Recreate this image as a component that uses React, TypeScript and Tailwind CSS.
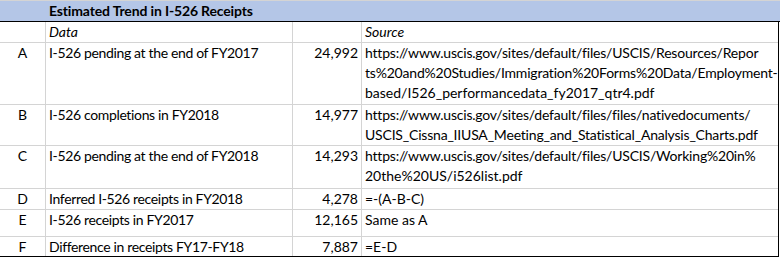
const rows = [
  {
    id: 'A',
    data: 'I-526 pending at the end of FY2017',
    value: '24,992',
    source: [
      'https://www.uscis.gov/sites/default/files/USCIS/Resources/Repor',
      'ts%20and%20Studies/Immigration%20Forms%20Data/Employment-',
      'based/I526_performancedata_fy2017_qtr4.pdf',
    ],
    h: 'h-[62px]',
  },
  {
    id: 'B',
    data: 'I-526 completions in FY2018',
    value: '14,977',
    source: [
      'https://www.uscis.gov/sites/default/files/files/nativedocuments/',
      'USCIS_Cissna_IIUSA_Meeting_and_Statistical_Analysis_Charts.pdf',
    ],
    h: 'h-[41px]',
  },
  {
    id: 'C',
    data: 'I-526 pending at the end of FY2018',
    value: '14,293',
    source: [
      'https://www.uscis.gov/sites/default/files/USCIS/Working%20in%',
      '20the%20US/i526list.pdf',
    ],
    h: 'h-[43px]',
  },
  {
    id: 'D',
    data: 'Inferred I-526 receipts in FY2018',
    value: '4,278',
    source: ['=-(A-B-C)'],
    h: 'h-[21px]',
  },
  {
    id: 'E',
    data: 'I-526 receipts in FY2017',
    value: '12,165',
    source: ['Same as A'],
    h: 'h-[27px]',
  },
  {
    id: 'F',
    data: 'Difference in receipts FY17-FY18',
    value: '7,887',
    source: ['=E-D'],
    h: 'h-[20px]',
  },
];

const App = () => {
  return (
    <div className="w-[780px] h-[258px] bg-white text-black text-[14px] leading-[20px] font-['Lato',sans-serif] overflow-hidden">
      {/* title band */}
      <div className="h-[22px] border-t border-b border-t-[#d4d4d4] border-b-black bg-[#b4c6e7] pl-[49px] font-bold whitespace-nowrap tracking-[-0.15px]">
        Estimated Trend in I-526 Receipts
      </div>
      <div className="w-[779px] border-r border-black">
        {/* column captions */}
        <div className="flex h-[21px] border-b border-[#d4d4d4] italic">
          <div className="w-[46px] border-r border-[#d4d4d4]" />
          <div className="w-[247px] border-r border-[#d4d4d4] pl-[3px]">Data</div>
          <div className="w-[69px] border-r border-[#d4d4d4]" />
          <div className="flex-1 pl-[3px]">Source</div>
        </div>
        {rows.map((r, i) => (
          <div
            key={r.id}
            className={`flex ${r.h} border-b ${
              i === rows.length - 1 ? 'border-black' : 'border-[#d4d4d4]'
            }`}
          >
            <div className="w-[46px] border-r border-[#d4d4d4] text-center">{r.id}</div>
            <div className="w-[247px] border-r border-[#d4d4d4] pl-[3px] whitespace-nowrap overflow-hidden tracking-[-0.35px]">
              {r.data}
            </div>
            <div className="w-[69px] border-r border-[#d4d4d4] pr-[3px] text-right">{r.value}</div>
            <div className="flex-1 pl-[3px] min-w-0 overflow-hidden">
              {r.source.map((s) => (
                <div
                  key={s}
                  className={`whitespace-nowrap ${s.length > 56 ? 'tracking-[-0.2px]' : ''}`}
                >
                  {s}
                </div>
              ))}
            </div>
          </div>
        ))}
      </div>
    </div>
  );
};

export default App;
